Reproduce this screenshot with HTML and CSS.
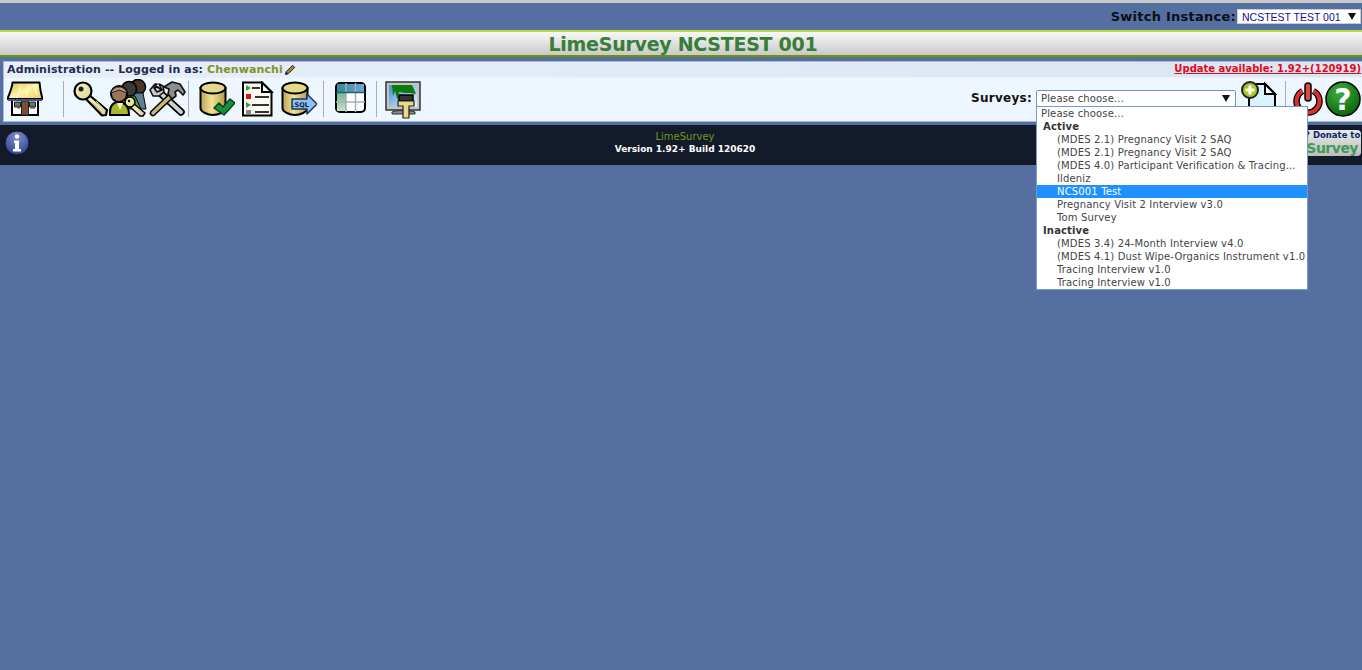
FILE: index.html
```html
<!DOCTYPE html>
<html lang="en">
<head>
<meta charset="utf-8">
<title>LimeSurvey</title>
<link rel="stylesheet" href="styles.css">
</head>
<body>
<svg class="defs" width="0" height="0">
  <defs>
    <linearGradient id="gold" x1="0" x2="1" y1="0" y2="0"><stop offset="0" stop-color="#b9a451"/><stop offset=".45" stop-color="#f2e296"/><stop offset="1" stop-color="#b39b45"/></linearGradient>
    <linearGradient id="roof" x1="0" x2="1" y1="0" y2="1"><stop offset="0" stop-color="#d9c04f"/><stop offset=".5" stop-color="#fdf3a8"/><stop offset="1" stop-color="#e6cd5c"/></linearGradient>
    <linearGradient id="keyg" x1="0" x2="1" y1="0" y2="1"><stop offset="0" stop-color="#fbf7c0"/><stop offset="1" stop-color="#d9d39a"/></linearGradient>
    <linearGradient id="screen" x1="0" x2="1" y1="0" y2="1"><stop offset="0" stop-color="#3f8fd6"/><stop offset="1" stop-color="#e8f4fc"/></linearGradient>
    <linearGradient id="cellT" x1="0" x2="1" y1="0" y2="0"><stop offset="0" stop-color="#2f8a93"/><stop offset="1" stop-color="#6fa6d8"/></linearGradient>
    <linearGradient id="cellL" x1="0" x2="0" y1="0" y2="1"><stop offset="0" stop-color="#6fb39a"/><stop offset="1" stop-color="#c7dfcb"/></linearGradient>
    <radialGradient id="greenball" cx=".4" cy=".3" r=".8"><stop offset="0" stop-color="#3fb13f"/><stop offset="1" stop-color="#045b04"/></radialGradient>
    <radialGradient id="infoball" cx=".5" cy=".25" r=".8"><stop offset="0" stop-color="#7d8fca"/><stop offset="1" stop-color="#2b3d8c"/></radialGradient>
  </defs>
</svg>

<header class="instance-bar">
  <span class="instance-label">Switch Instance:</span>
  <div class="instance-select"><span>NCSTEST TEST 001</span><i class="arrow"></i></div>
</header>

<div class="title-bar">LimeSurvey NCSTEST 001</div>

<section class="admin">
  <div class="admin-head">
    <div class="login">Administration -- Logged in as: <a class="user">Chenwanchi</a><svg class="pencil" viewBox="0 0 12 12"><path d="M1.500 10.500 2.300 7.600 8.600 1.300 10.700 3.400 4.400 9.700Z" fill="#a8892f" stroke="#222" stroke-width="1"/><path d="M1.500 10.500 2.300 7.600 4.400 9.700Z" fill="#222"/></svg></div>
    <a class="update">Update available: 1.92+(120919)</a>
  </div>
  <div class="toolbar">
    <div class="tools">
      <svg class="ico home" viewBox="0 0 36 36"><path d="M5 18H31V34H5Z" fill="#fff" stroke="#000" stroke-width="2"/><path d="M14.500 20h7v14h-7Z" fill="#7a4f2d" stroke="#222"/><path d="M7.500 21h6v5h-6ZM22.500 21h6v5h-6Z" fill="#62786c" stroke="#222"/><path d="M10.500 27H13M23 27h5" stroke="#333"/><path d="M5.500 1.500H32.500C33 8 34 13 35.500 18H.5C2 13 5 8 5.500 1.500Z" fill="url(#roof)" stroke="#000" stroke-width="2" stroke-linejoin="round"/><path d="M1 18H35V20H1Z" fill="#3f4f98"/><path d="M14 4 10 16M22 4 19 16M27 4 30 14" stroke="#fff8c8" stroke-width="1.500" opacity=".8"/></svg>
      <i class="sep sep-a"></i>
      <svg class="ico key" viewBox="0 0 36 36"><path d="M15 13 34 29 33 34 29 34.500 12 17Z" fill="url(#keyg)" stroke="#000" stroke-width="2.200" stroke-linejoin="round"/><path d="M20 22 28 31M23 20 31 28" stroke="#bdb67c"/><circle cx="10" cy="10" r="8.500" fill="url(#keyg)" stroke="#000" stroke-width="2.200"/><circle cx="8" cy="8" r="2.500" fill="#222"/></svg>
      <svg class="ico users" viewBox="0 0 38 38"><circle cx="29" cy="8" r="7.500" fill="#4a3426" stroke="#000" stroke-width="1.500"/><path d="M23 14h11l3 16H23Z" fill="#5d7f96" stroke="#000"/><circle cx="20" cy="10" r="7.500" fill="#3a3a3a" stroke="#000" stroke-width="1.500"/><path d="M16 17h10l6 13H16Z" fill="#5aa52c" stroke="#000"/><path d="M1 36C0 26 5 23 10 23S20 27 20 36Z" fill="#a7b82c" stroke="#000" stroke-width="2"/><path d="M8 24l3 7 3-7Z" fill="#f4f4e0"/><circle cx="10" cy="15" r="8" fill="#9a7658" stroke="#000" stroke-width="2"/><path d="M2 14C4 6 16 6 18 14L10 11Z" fill="#b89c7c" stroke="#222"/><path d="M24 24 36 34 34 37 31 37 20 27Z" fill="url(#keyg)" stroke="#000" stroke-width="1.500" stroke-linejoin="round"/><circle cx="21" cy="23" r="5" fill="url(#keyg)" stroke="#000" stroke-width="1.500"/><circle cx="20" cy="22" r="1.200"/></svg>
      <svg class="ico tools-ico" viewBox="0 0 38 36"><path d="M9 9 33 31" stroke="#000" stroke-width="7.500" stroke-linecap="round"/><path d="M9 9 33 31" stroke="#cfcfcf" stroke-width="4" stroke-linecap="round"/><path d="M2 9 7 3 9 3 6 7 9 11 14 9 11 3 15 5 16 11 11 15 5 15Z" fill="#c9c9c9" stroke="#111" stroke-width="1.600" stroke-linejoin="round"/><path d="M25 13 5 32" stroke="#000" stroke-width="6.500" stroke-linecap="round"/><path d="M25 13 5 32" stroke="#c8ba72" stroke-width="3.500" stroke-linecap="round"/><path d="M16 6 24 1 32 3 37 11 35 14 30 9 27 11 28 15 24 18 20 13 21 8Z" fill="#8d8d8d" stroke="#111" stroke-width="1.600" stroke-linejoin="round"/></svg>
      <i class="sep sep-b"></i>
      <svg class="ico db" viewBox="0 0 36 36"><path d="M1.500 7V27C1.500 31 9 34 14 34S26.500 31 26.500 27V7Z" fill="url(#gold)" stroke="#000" stroke-width="2"/><ellipse cx="14" cy="7" rx="12.500" ry="5.500" fill="#e6d789" stroke="#000" stroke-width="2"/><path d="M15 27 20 22 24 26 31 18 36 22 25 34Z" fill="#16923f" stroke="#0c3f20" stroke-width="1.500" stroke-linejoin="round"/></svg>
      <svg class="ico list" viewBox="0 0 36 36"><path d="M5 1.500H24L33.500 11V34.500H5Z" fill="#fafaf0" stroke="#000" stroke-width="2"/><path d="M24 1.500V11H33.500Z" fill="#fff" stroke="#000" stroke-width="2"/><path d="M8 4l5 3-5 3Z" fill="#3d9a3d"/><path d="M8 13h5v5H8Z" fill="#d8141a"/><path d="M8 21l5 3-5 3Z" fill="#3d9a3d"/><path d="M8 29h5v4H8Z" fill="#7d8a8a"/><path d="M14 7h8M17 16h14M14 24h17M17 31h14" stroke="#333" stroke-width="2"/></svg>
      <svg class="ico sql" viewBox="0 0 36 36"><path d="M1.500 7V27C1.500 31 9 34 14 34S26.500 31 26.500 27V7Z" fill="url(#gold)" stroke="#000" stroke-width="2"/><ellipse cx="14" cy="7" rx="12.500" ry="5.500" fill="#e6d789" stroke="#000" stroke-width="2"/><path d="M11 18H26V13L36 23 26 33V28H11Z" fill="#8ec1ee" stroke="#1a3560" stroke-width="1.500" stroke-linejoin="round"/><text x="11" y="26" class="sql-text">.SQL</text></svg>
      <i class="sep sep-c"></i>
      <svg class="ico table" viewBox="0 0 36 36"><rect x="3" y="2" width="29" height="29" rx="4" fill="#fff" stroke="#000" stroke-width="2"/><path d="M4 3H31V11H4Z" fill="url(#cellT)"/><path d="M4 11H13V30H4Z" fill="url(#cellL)"/><path d="M13 2V31M22.500 2V31M3 21H32" stroke="#a4b0b0" stroke-width="1.500"/><path d="M3 11.500H32" stroke="#205f70" stroke-width="1.500"/></svg>
      <i class="sep sep-d"></i>
      <svg class="ico monitor" viewBox="0 0 36 38"><path d="M1 1H35V29H1Z" fill="#c4c4c4" stroke="#333" stroke-width="1.500"/><path d="M4 4H32V26H4Z" fill="url(#screen)"/><path d="M7 4H27L31 13 25 12 20 12 14 11 12.500 19 10 10 8 15Z" fill="#0c7a0c"/><path d="M7 31C10 29 26 29 30 31V33H7Z" fill="#8a8a8a" stroke="#333"/><path d="M14 14H28V20H14Z" fill="#333" stroke="#000" stroke-width="1.500"/><path d="M13 20H29V25H24V37H18V25H13Z" fill="#e8d88a" stroke="#222" stroke-width="1.200"/></svg>
    </div>
    <div class="survey-tools">
      <span class="surveys-label">Surveys:</span>
      <div class="survey-wrap">
        <div class="survey-select"><span>Please choose...</span><i class="arrow"></i></div>
        <ul class="survey-menu">
          <li>Please choose...</li>
          <li class="group">Active</li>
          <li class="opt">(MDES 2.1) Pregnancy Visit 2 SAQ</li>
          <li class="opt">(MDES 2.1) Pregnancy Visit 2 SAQ</li>
          <li class="opt">(MDES 4.0) Participant Verification &amp; Tracing...</li>
          <li class="opt">Ildeniz</li>
          <li class="opt selected">NCS001 Test</li>
          <li class="opt">Pregnancy Visit 2 Interview v3.0</li>
          <li class="opt">Tom Survey</li>
          <li class="group">Inactive</li>
          <li class="opt">(MDES 3.4) 24-Month Interview v4.0</li>
          <li class="opt">(MDES 4.1) Dust Wipe-Organics Instrument v1.0</li>
          <li class="opt">Tracing Interview v1.0</li>
          <li class="opt">Tracing Interview v1.0</li>
        </ul>
      </div>
      <svg class="ico newdoc" viewBox="0 0 36 36"><path d="M8 3H24L34 13V35H8Z" fill="#d9f2fb" stroke="#000" stroke-width="2"/><path d="M24 3V13H34Z" fill="#fff" stroke="#000" stroke-width="2"/><circle cx="9" cy="9" r="8" fill="#a8c820" stroke="#222" stroke-width="2"/><path d="M9 4.500V13.500M4.500 9H13.500" stroke="#fff" stroke-width="3"/></svg>
      <i class="sep sep-e"></i>
      <svg class="ico power" viewBox="0 0 32 36"><path d="M10.500 10A11.500 11.500 0 1 0 21.500 10" fill="none" stroke="#000" stroke-width="6.500"/><path d="M10.500 10A11.500 11.500 0 1 0 21.500 10" fill="none" stroke="#d8312f" stroke-width="4"/><rect x="13" y="2" width="6" height="18" rx="3" fill="#e04a45" stroke="#000" stroke-width="1.500"/></svg>
      <svg class="ico help" viewBox="0 0 36 36"><circle cx="18" cy="18" r="17" fill="url(#greenball)" stroke="#000" stroke-width="1.500"/><text x="18" y="29" class="help-text">?</text></svg>
    </div>
  </div>
</section>

<footer class="footer">
  <svg class="info" viewBox="0 0 26 26"><circle cx="13" cy="13" r="12" fill="url(#infoball)" stroke="#0c1230"/><circle cx="13" cy="6.500" r="2.200" fill="#fff"/><path d="M10 10.500H15V19H17V21.500H9V19H11V13H10Z" fill="#fff"/></svg>
  <div class="version">
    <div class="brand">LimeSurvey</div>
    <div class="build">Version 1.92+ Build 120620</div>
  </div>
  <div class="donate"><div class="donate-top">? Donate to</div><div class="donate-name">Survey</div></div>
</footer>
</body>
</html>
```
FILE: styles.css
```css
* { box-sizing: border-box; }
html, body { margin: 0; padding: 0; }
body {
  height: 670px;
  overflow: hidden;
  background: #556fa0;
  font-family: "DejaVu Sans", Verdana, sans-serif;
  font-size: 11px;
  color: #222;
  border-top: 3px solid;
  border-image: linear-gradient(#c8c8c8, #c8c8c8 66%, #eee) 1;
}
.defs { position: absolute; }
.instance-bar {
  height: 27px;
  display: flex;
  justify-content: flex-end;
  align-items: center;
  padding: 0 1px 0 0;
  gap: 1px;
}
.instance-label { font-size: 13px; font-weight: bold; color: #0b0f18; letter-spacing: .25px; }
.instance-select {
  width: 124px;
  height: 15px;
  background: #fff;
  border: 1px solid #ccc;
  display: flex;
  align-items: center;
  justify-content: space-between;
  padding: 0 4px;
  font-family: "Liberation Sans", Arial, sans-serif;
  font-size: 10.5px;
  white-space: nowrap;
  color: #10108a;
}
.arrow {
  width: 0;
  height: 0;
  flex: none;
  border-left: 4px solid transparent;
  border-right: 4px solid transparent;
  border-top: 7px solid #111;
}
.title-bar {
  height: 27px;
  border-top: 2px solid #b5dc3c;
  border-bottom: 2px solid #6f9400;
  background: linear-gradient(#f8f8f8, #c9c9c9);
  text-align: center;
  padding-left: 4px;
  font-size: 19px;
  line-height: 25px;
  font-weight: bold;
  letter-spacing: -.27px;
  color: #377e37;
}
.admin {
  margin: 4px 0 0 3px;
  border: 1px solid #a9bad6;
  border-right: 0;
  background: #eef6ff;
}
.admin-head {
  height: 16px;
  display: flex;
  justify-content: space-between;
  align-items: center;
  padding: 0 1px 0 3px;
  background: linear-gradient(90deg, #e7eef8, #dbe6f3);
  border-bottom: 1px solid #e9f0fa;
}
.login { font-weight: bold; color: #1c2d50; font-size: 11px; letter-spacing: .12px; display: flex; align-items: center; white-space: pre; }
.user { color: #7d9428; }
.pencil { width: 12px; height: 12px; margin-left: 1px; }
.update { color: #e00a1c; font-weight: bold; font-size: 10px; text-decoration: underline; margin-top: -2px; }
.toolbar {
  height: 43px;
  display: flex;
  justify-content: space-between;
  align-items: flex-start;
  padding-top: 3px;
}
.tools { display: flex; align-items: flex-start; padding-left: 3px; }
.ico { display: block; width: 36px; height: 36px; flex: none; }
.sep { display: block; width: 1px; height: 36px; background: #a9aeb5; flex: none; }
.sep-a { margin: 0 9px 0 20px; }
.users { width: 38px; height: 38px; margin-top: -2px; }
.tools-ico { width: 38px; margin-left: 1px; }
.sep-b { margin: 0 10px 0 2px; }
.list { margin: 0 7px 0 3px; }
.sep-c { margin: 0 9px 0 6px; }
.sep-d { margin: 0 8px 0 7px; }
.monitor { height: 38px; }
.sql-text { font-family: "DejaVu Sans", sans-serif; font-size: 6.500px; font-weight: bold; fill: #10224a; }
.survey-tools { display: flex; align-items: flex-start; padding-right: 1px; }
.surveys-label { font-size: 12px; line-height: 17px; font-weight: bold; color: #111; margin: 9px 4px 0 0; letter-spacing: .27px; }
.survey-wrap { position: relative; width: 200px; height: 17px; margin: 9px 5px 0 0; }
.survey-select {
  height: 17px;
  background: #fff;
  border: 1px solid #6f93c8;
  border-radius: 2px;
  display: flex;
  justify-content: space-between;
  align-items: center;
  padding: 0 5px 0 4px;
  font-size: 10px;
  letter-spacing: .15px;
  color: #444;
}
.survey-menu {
  position: absolute;
  left: 0;
  top: 16px;
  width: 272px;
  margin: 0;
  padding: 0;
  list-style: none;
  background: #fff;
  border: 1px solid #7a98c8;
  font-size: 10px;
  letter-spacing: .15px;
  color: #444;
  z-index: 5;
}
.survey-menu li { height: 13px; line-height: 13px; padding-left: 4px; white-space: nowrap; }
.survey-menu .group { font-weight: bold; padding-left: 6px; color: #333; }
.survey-menu .opt { padding-left: 20px; }
.survey-menu .selected { background: #1e90ff; color: #fff; }
.sep-e { margin: 0 6px 0 8px; }
.power { width: 32px; }
.help { margin-left: 1px; }
.help-text { font-family: "DejaVu Sans", sans-serif; font-size: 30px; font-weight: bold; fill: #fff; text-anchor: middle; }
.footer {
  margin-top: 3px;
  height: 40px;
  background: #131a29;
  padding-bottom: 5px;
  display: grid;
  grid-template-columns: 1fr auto 1fr;
  align-items: center;
}
.info { width: 26px; height: 26px; margin-left: 4px; }
.version { text-align: center; line-height: 12px; margin-left: 8px; }
.brand { color: #6d9b1f; font-size: 10px; }
.build { color: #fff; font-weight: bold; font-size: 9px; }
.donate {
  justify-self: end;
  width: 56px;
  height: 26px;
  margin-right: 1px;
  background: linear-gradient(#e9e9e9, #bdbdbd);
  border-radius: 0 4px 4px 0;
  overflow: hidden;
  text-align: right;
  padding-right: 3px;
}
.donate-top { font-size: 8.500px; line-height: 11px; font-weight: bold; color: #0f1d6c; white-space: nowrap; }
.donate-name { font-size: 14px; line-height: 14px; font-weight: bold; letter-spacing: -.5px; color: #3f9a57; }
```
